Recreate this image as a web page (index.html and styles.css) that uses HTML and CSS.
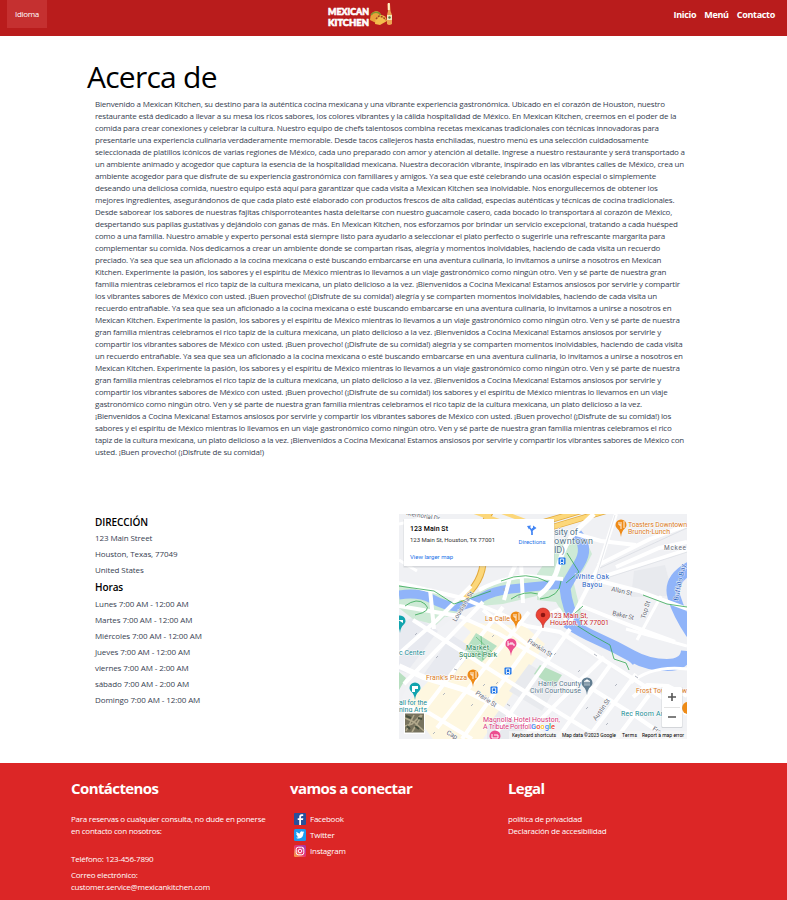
FILE: index.html
```html
<!DOCTYPE html>
<html lang="es">
<head>
<meta charset="utf-8">
<title>Mexican Kitchen</title>
<link rel="stylesheet" href="styles.css">
</head>
<body>
<header class="top">
  <button class="lang">Idioma</button>
  <svg class="logo" width="66" height="28" viewBox="0 0 66 28">
    <g class="logo-text">
      <text x="1" y="15" textLength="41" lengthAdjust="spacingAndGlyphs">MEXICAN</text>
      <text x="1" y="25.500" textLength="41" lengthAdjust="spacingAndGlyphs">KITCHEN</text>
    </g>
    <path d="M43 20q0-8 6-9q5 0 6 8l-6 4z" fill="#e9a13b"/>
    <path d="M44 15q3-4 8-2l4 5" fill="none" stroke="#7f9630" stroke-width="1.500"/>
    <path d="M48 24q0-8 6-9q5 0 6 6l-7 4z" fill="#f3bd4c"/>
    <path d="M49 19l3-3 4 1 3 3" fill="none" stroke="#a3401f" stroke-width="1.500" stroke-dasharray="2 1"/>
    <path d="M60.500 4h2.500l.5 7 1.500 4v9q-3 2-5 0v-9l1-4z" fill="#eda553"/>
    <path d="M60.800 3h2v7h-2z" fill="#fff0c8"/><path d="M60 15h5v5h-5z" fill="#f5e8bd"/><circle cx="62.500" cy="17.500" r="1.200" fill="#55713d"/>
  </svg>
  <nav class="nav"><a>Inicio</a><a>Menú</a><a>Contacto</a></nav>
</header>
<main>
  <h1>Acerca de</h1>
  <p class="about">Bienvenido a Mexican Kitchen, su destino para la auténtica cocina mexicana y una vibrante experiencia gastronómica. Ubicado en el corazón de Houston, nuestro<br>
restaurante está dedicado a llevar a su mesa los ricos sabores, los colores vibrantes y la cálida hospitalidad de México. En Mexican Kitchen, creemos en el poder de la<br>
comida para crear conexiones y celebrar la cultura. Nuestro equipo de chefs talentosos combina recetas mexicanas tradicionales con técnicas innovadoras para<br>
presentarle una experiencia culinaria verdaderamente memorable. Desde tacos callejeros hasta enchiladas, nuestro menú es una selección cuidadosamente<br>
seleccionada de platillos icónicos de varias regiones de México, cada uno preparado con amor y atención al detalle. Ingrese a nuestro restaurante y será transportado a<br>
un ambiente animado y acogedor que captura la esencia de la hospitalidad mexicana. Nuestra decoración vibrante, inspirado en las vibrantes calles de México, crea un<br>
ambiente acogedor para que disfrute de su experiencia gastronómica con familiares y amigos. Ya sea que esté celebrando una ocasión especial o simplemente<br>
deseando una deliciosa comida, nuestro equipo está aquí para garantizar que cada visita a Mexican Kitchen sea inolvidable. Nos enorgullecemos de obtener los<br>
mejores ingredientes, asegurándonos de que cada plato esté elaborado con productos frescos de alta calidad, especias auténticas y técnicas de cocina tradicionales.<br>
Desde saborear los sabores de nuestras fajitas chisporroteantes hasta deleitarse con nuestro guacamole casero, cada bocado lo transportará al corazón de México,<br>
despertando sus papilas gustativas y dejándolo con ganas de más. En Mexican Kitchen, nos esforzamos por brindar un servicio excepcional, tratando a cada huésped<br>
como a una familia. Nuestro amable y experto personal está siempre listo para ayudarlo a seleccionar el plato perfecto o sugerirle una refrescante margarita para<br>
complementar su comida. Nos dedicamos a crear un ambiente donde se compartan risas, alegría y momentos inolvidables, haciendo de cada visita un recuerdo<br>
preciado. Ya sea que sea un aficionado a la cocina mexicana o esté buscando embarcarse en una aventura culinaria, lo invitamos a unirse a nosotros en Mexican<br>
Kitchen. Experimente la pasión, los sabores y el espíritu de México mientras lo llevamos a un viaje gastronómico como ningún otro. Ven y sé parte de nuestra gran<br>
familia mientras celebramos el rico tapiz de la cultura mexicana, un plato delicioso a la vez. ¡Bienvenidos a Cocina Mexicana! Estamos ansiosos por servirle y compartir<br>
los vibrantes sabores de México con usted. ¡Buen provecho! (¡Disfrute de su comida!) alegría y se comparten momentos inolvidables, haciendo de cada visita un<br>
recuerdo entrañable. Ya sea que sea un aficionado a la cocina mexicana o esté buscando embarcarse en una aventura culinaria, lo invitamos a unirse a nosotros en<br>
Mexican Kitchen. Experimente la pasión, los sabores y el espíritu de México mientras lo llevamos a un viaje gastronómico como ningún otro. Ven y sé parte de nuestra<br>
gran familia mientras celebramos el rico tapiz de la cultura mexicana, un plato delicioso a la vez. ¡Bienvenidos a Cocina Mexicana! Estamos ansiosos por servirle y<br>
compartir los vibrantes sabores de México con usted. ¡Buen provecho! (¡Disfrute de su comida!) alegría y se comparten momentos inolvidables, haciendo de cada visita<br>
un recuerdo entrañable. Ya sea que sea un aficionado a la cocina mexicana o esté buscando embarcarse en una aventura culinaria, lo invitamos a unirse a nosotros en<br>
Mexican Kitchen. Experimente la pasión, los sabores y el espíritu de México mientras lo llevamos a un viaje gastronómico como ningún otro. Ven y sé parte de nuestra<br>
gran familia mientras celebramos el rico tapiz de la cultura mexicana, un plato delicioso a la vez. ¡Bienvenidos a Cocina Mexicana! Estamos ansiosos por servirle y<br>
compartir los vibrantes sabores de México con usted. ¡Buen provecho! (¡Disfrute de su comida!) los sabores y el espíritu de México mientras lo llevamos en un viaje<br>
gastronómico como ningún otro. Ven y sé parte de nuestra gran familia mientras celebramos el rico tapiz de la cultura mexicana, un plato delicioso a la vez.<br>
¡Bienvenidos a Cocina Mexicana! Estamos ansiosos por servirle y compartir los vibrantes sabores de México con usted. ¡Buen provecho! (¡Disfrute de su comida!) los<br>
sabores y el espíritu de México mientras lo llevamos en un viaje gastronómico como ningún otro. Ven y sé parte de nuestra gran familia mientras celebramos el rico<br>
tapiz de la cultura mexicana, un plato delicioso a la vez. ¡Bienvenidos a Cocina Mexicana! Estamos ansiosos por servirle y compartir los vibrantes sabores de México con<br>
usted. ¡Buen provecho! (¡Disfrute de su comida!)</p>
  <section class="visit">
    <div class="info">
      <h2>DIRECCIÓN</h2>
      <p>123 Main Street</p><p>Houston, Texas, 77049</p><p>United States</p>
      <h2 class="hours">Horas</h2>
      <p>Lunes 7:00 AM - 12:00 AM</p><p>Martes 7:00 AM - 12:00 AM</p><p>Miércoles 7:00 AM - 12:00 AM</p><p>Jueves 7:00 AM - 12:00 AM</p><p>viernes 7:00 AM - 2:00 AM</p><p>sábado 7:00 AM - 2:00 AM</p><p>Domingo 7:00 AM - 12:00 AM</p>
    </div>
    <svg class="map" width="288" height="225" viewBox="0 0 288 225">
      <defs>
        <g id="pin"><path d="M0 8C-1-1-5.500 0-5.500-4a5.500 5.500 0 0 1 11 0C5.500 0 1-1 0 8z"/></g>
        <g id="bus"><rect x="-3.500" y="-3.500" width="7" height="7" rx="1" fill="#1a73e8"/><path d="M-1.700-2h3.400v3.500h-3.400zM-1.500 2v1M1.500 2v1" fill="none" stroke="#fff" stroke-width=".9"/></g>
      </defs>
      <rect width="288" height="225" fill="#f0f1f4"/>
      <!-- city blocks -->
      <path d="M70 91L128 106 260 183 288 203V225H0V190L20 150 36 118z" fill="#f1f2f5"/>
      <path d="M60 108L126 112 146 130 84 225H34L8 190 40 156 72 118z" fill="#fef7e0"/>
      <path d="M0 110l17-8 22 15-32 42-7-2zM25 160l28-39 22 14-31 39z" fill="#e8eaf0"/>
      <path d="M110 177l20-27 30 18-17 29zM88 213l13-18 26 17-9 13h-30z" fill="#e8eaee"/>
      <path d="M235 57l31-6 8 31-42 1z" fill="#e8eaee"/>
      <!-- parks -->
      <path d="M0 68L30 74 53 89 80 78 112 62 146 66V80L104 90 70 93 48 103 0 90z" fill="#ceead6"/>
      <path d="M0 88L52 97 37 111 14 105 0 94z" fill="#ceead6"/>
      <path d="M160 27L183 18 193 40 184 57 174 66 184 107 172 113 157 88 138 86V60z" fill="#ceead6"/>
      <path d="M141 151l22 10-8 12-20-13zM0 158l7 6-7 12z" fill="#b7dfc0"/>
      <!-- river -->
      <g fill="none" stroke="#90b4f9" stroke-linejoin="round">
        <path d="M0 81Q20 78 33 85T58 93Q74 89 84 83T112 75T163 70" stroke-width="9"/>
        <path d="M178 20Q190 34 180 50T166 74Q168 94 178 111" stroke-width="11"/>
        <path d="M168 108Q181 117 199 125T233 142T268 151T288 137" stroke-width="12"/>
        <path d="M291 54Q270 66 275 83T293 119" stroke-width="13"/>
      </g>
      <path d="M229 146l5 5 4-6z" fill="#90b4f9"/>
      <!-- highways -->
      <g fill="none">
        <path d="M92-3Q82 9 84 40C86 60 77 74 62 86" stroke="#e2a93b" stroke-width="7"/>
        <path d="M92-3Q82 9 84 40C86 60 77 74 62 86" stroke="#fcd77a" stroke-width="5"/>
        <path d="M75-2L100 7M100-3L140 12" stroke="#fcd77a" stroke-width="4"/>
        <path d="M140 17L207-3M138 10L182-3" stroke="#e2a93b" stroke-width="6"/>
        <path d="M140 17L207-3M138 10L182-3" stroke="#fcd77a" stroke-width="4.500"/>
      </g>
      <!-- streets -->
      <g fill="none" stroke="#fff" stroke-width="4" stroke-linejoin="round">
        <path d="M0 69L63 84 95 97 128 112 161 118 208 148 264 184 288 200"/>
        <path d="M0 92L60 102 100 120 171 161 238 203 270 225"/>
        <path d="M14 106L76 146 141 187 203 225"/>
        <path d="M0 152L24 163 66 176 96 191 150 225" stroke-width="5.500"/>
        <path d="M0 190L30 199 73 225M84 96L129 131"/>
        <path d="M-5 144L38 106 72 72M5 170L84 88M24 197L104 93M38 214L130 98M63 225L112 156 144 112M93 225L171 115M122 225L205 143M158 225L212 150M188 225L237 160M217 225L250 181"/>
        <path d="M31 75L35 115M105 86L112 60 120 44M122 48L124 89M80 76Q100 65 126 62L164 65"/>
        <path d="M139 82Q155 71 160 50T179 15L195 0" stroke-width="5"/>
        <path d="M170 110L200 52 217 0"/>
        <path d="M197 65L288 36M197 66L240 77 288 95M180 91L235 113 276 128"/>
        <path d="M199 51L251 25 288 11M217 53L260 34 288 28M170 18L202 27 237 31"/>
        <path d="M238 126L262 82M232 169Q252 151 288 155M227 115L288 132" stroke-width="3"/>
        <path d="M234 183L248 171 269 172 288 182"/>
        <path d="M0 10L38 1M0 46L18 57M140 104L160 95 170 111" stroke-width="3"/>
      </g>
      <path d="M77 119l21 13-15 16-17-12z" fill="#b7e1c3"/>
      <g fill="none" stroke="#cdd1d8" stroke-width=".5">
        <path d="M198 67L288 38M201 54L288 14M197 64L216 1"/>
      </g>
      <g fill="none" stroke="#34a853" stroke-width=".8">
        <path d="M0 72L35 77 55 90 92 77M6 92q12-9 20-2t-10 11M102 67Q128 56 149 68M112 85q13-9 27-5M141 85q20-2 21-18M168 39l12 19-13 11M177 111l16 10 18 10 4 14 12 4 3 7M244 81l24 9 20 3M184 92l-9 8"/>
        <path d="M77 123l16 15M72 131l13 12M82 122l2 24" opacity=".6"/>
      </g>
      <g fill="none" stroke="#a9afba" stroke-width=".9">
        <path d="M16 121l2-2M37 144l2-2M44 181l2-2M72 192l2-2M84 172l2-2M97 170l2-2M111 205l2-2M93 123l2-2M61 146l2-2M179 158l2-2M216 172l2-2M187 195l2-2M207 211l2-2M34 220l2-2M155 141l2-2M55 155l3 1M108 190l3 2M195 140l3 2M236 162l3 2M105 74v3M120 81v3M68 85l3 1"/>
      </g>
      <!-- labels -->
      <g class="lbl street">
        <text transform="translate(7 1) rotate(10)" textLength="34">Memorial Dr</text>
        <text transform="translate(57 108) rotate(-59)" textLength="34">Louisiana St</text>
        <text transform="translate(128 128) rotate(33)" textLength="28">Franklin St</text>
        <text transform="translate(76 180) rotate(34)" textLength="24">Prairie St</text>
        <text transform="translate(197 207) rotate(-55)" textLength="25">Austin St</text>
        <text transform="translate(212 77) rotate(12)" textLength="21">Allen St</text>
        <text transform="translate(213 101) rotate(13)" textLength="22">Baker St</text>
        <text transform="translate(246 105) rotate(-73)" textLength="18">Top St</text>
        <text x="265" y="36" textLength="22">Mckee</text>
        <text transform="translate(47 220) rotate(29)">Cap</text>
        <text transform="translate(253 216) rotate(30)">Fra</text>
      </g>
      <g class="lbl blue">
        <text x="176" y="65" textLength="34">White Oak</text><text x="183" y="73" textLength="20">Bayou</text>
        <text transform="translate(279 87) rotate(-78)" textLength="37">Buffalo Bay</text>
      </g>
      <g class="lbl slate">
        <text x="155" y="21" textLength="24" class="big">sity of</text><text x="155" y="30" textLength="39" class="big">owntown</text><text x="155" y="39" textLength="11" class="big">ID)</text>
        <text x="139" y="172" textLength="43">Harris County</text><text x="131" y="179" textLength="51">Civil Courthouse</text>
      </g>
      <g class="lbl teal">
        <text x="0" y="141" textLength="26">c Center</text><text x="0" y="191" textLength="28">all for the</text><text x="0" y="198" textLength="28">ning Arts</text>
        <text x="222" y="202" textLength="42">Rec Room Ar</text>
      </g>
      <g class="lbl green"><text x="67" y="136" textLength="23">Market</text><text x="60" y="143" textLength="38">Square Park</text></g>
      <g class="lbl orange">
        <text x="86" y="107" textLength="25">La Calle</text><text x="27" y="166" textLength="41">Frank's Pizza</text>
        <text x="229" y="13" textLength="59">Toasters Downtown</text><text x="229" y="20" textLength="42">Brunch-Lunch</text>
        <text x="237" y="179" textLength="51">Frost Town Brew</text>
      </g>
      <g class="lbl pink"><text x="84" y="208" textLength="77">Magnolia Hotel Houston,</text><text x="84" y="215" textLength="52">A Tribute Portfolio</text></g>
      <g class="lbl red"><text x="151" y="104" textLength="38">123 Main St,</text><text x="151" y="111" textLength="59">Houston, TX 77001</text></g>
      <!-- markers -->
      <g fill="#ee8b17"><use href="#pin" x="222" y="15"/><use href="#pin" x="117" y="107"/><use href="#pin" x="74" y="165"/><circle cx="289" cy="194" r="6"/></g>
      <g fill="none" stroke="#fff" stroke-width=".9"><path d="M220 8v3h2v4m0-7v3m3-4v7M115 100v3h2v4m0-7v3m3-4v7M72 158v3h2v4m0-7v3m3-4v7"/></g>
      <g fill="#12a4ae"><use href="#pin" x="16" y="178"/><use href="#pin" x="1" y="111"/></g>
      <path d="M13 172h6v3h-3v3h-3zM-1 106h5v3" fill="#fff"/>
      <g fill="#ec4e8f"><use href="#pin" x="112" y="134"/><use href="#pin" x="96" y="226"/></g>
      <path d="M109 127v5m0-2h6v2m-4-3h3M93 220v4h6v-3h-4" fill="none" stroke="#fff"/>
      <use href="#pin" x="188" y="173" fill="#617d91"/><path d="M185 167.500l3-2 3 2zM185 171h6M186 167.500v3m2-3v3m2-3v3" fill="#fff" stroke="#fff" stroke-width=".5"/>
      <path d="M144 114c-1-8-7-8-7-13a7 7 0 0 1 14 0c0 5-6 5-7 13z" fill="#ea4335" stroke="#b31412" stroke-width=".5"/><circle cx="144" cy="101" r="2.300" fill="#8e1511"/>
      <use href="#bus" x="163" y="47"/><use href="#bus" x="109" y="157"/><use href="#bus" x="95" y="176"/>
      <!-- info card -->
      <rect x="4.500" y="5.500" width="151" height="48" fill="#9aa0a6" opacity=".3"/>
      <rect x="5" y="5" width="150" height="47" fill="#fff"/>
      <g class="card">
        <text class="title" x="11" y="17" textLength="38">123 Main St</text>
        <text x="11" y="28" textLength="85">123 Main St, Houston, TX 77001</text>
        <text class="link" x="11" y="45" textLength="43">View larger map</text><text class="link" x="119.500" y="30" textLength="27">Directions</text>
      </g>
      <path d="M133 21v-3q0-2-3-5M133 17q0-3 3-3" fill="none" stroke="#4285f4" stroke-width="1.700"/><path d="M134 11.500l3.500 2.500-3.500 2.500zM128 12l4-.5-2 4z" fill="#4285f4"/>
      <!-- controls -->
      <rect x="262.500" y="173" width="21" height="41" rx="1" fill="#9aa0a6" opacity=".35"/><rect x="263" y="173" width="20" height="40" rx="1" fill="#fff"/>
      <path d="M265 193.500h16" stroke="#e3e3e3"/><path d="M269 183h8m-4-4v8M269 203h8" stroke="#555" stroke-width="1.600"/>
      <rect x="5" y="198" width="21" height="22" fill="#fff"/><rect x="6" y="199.500" width="19" height="19" fill="#77735e"/>
      <path d="M6 204l9 4 10 9M7 217l8-16M13 218l10-17M6 212l7-2 9-9" fill="none" stroke="#b1a98c" stroke-width="1.500"/><path d="M7 202l5 2M16 212l4 3M8 212l3 3M19 204l4 1" stroke="#454e3c" stroke-width="2"/>
      <rect x="110" y="217" width="178" height="8" fill="#f5f5f5" opacity=".75"/>
      <text class="google" x="132" y="215" textLength="24"><tspan fill="#4285f4">G</tspan><tspan fill="#ea4335">o</tspan><tspan fill="#fbbc04">o</tspan><tspan fill="#4285f4">g</tspan><tspan fill="#34a853">l</tspan><tspan fill="#ea4335">e</tspan></text>
      <g class="legal-text"><text x="113" y="223" textLength="44">Keyboard shortcuts</text><text x="163" y="223" textLength="54">Map data ©2023 Google</text><text x="223" y="223" textLength="15">Terms</text><text x="243" y="223" textLength="42">Report a map error</text></g>
    </svg>
  </section>
</main>
<footer class="foot">
  <section>
    <h3>Contáctenos</h3>
    <p>Para reservas o cualquier consulta, no dude en ponerse<br>en contacto con nosotros:</p>
    <p class="phone">Teléfono: 123-456-7890</p>
    <p class="mail">Correo electrónico:<br>customer.service@mexicankitchen.com</p>
  </section>
  <section>
    <h3 class="connect">vamos a conectar</h3>
    <ul class="social">
      <li><svg width="12" height="12" viewBox="0 0 12 12"><rect width="12" height="12" rx="1" fill="#27509b"/><path d="M7 12V7h2l.3-1.800H7V4q0-1 1.200-1h1V1.300H8Q5.200 1.100 5.200 4v1.200H3.700V7h1.500v5z" fill="#fff"/></svg>Facebook</li>
      <li><svg width="12" height="12" viewBox="0 0 12 12"><rect width="12" height="12" rx="1.500" fill="#1d9bf0"/><path d="M2.500 2.800Q4 4.500 6 4.600 5.700 2.400 7.600 2.300q.8 0 1.200.5l1.200-.4-.7 1.100 1-.2-.9 1Q9.300 9.300 5 9.600q-1.700 0-3-.9 1.500.1 2.500-.7-1.300-.2-1.700-1.300h.8Q2.200 6.100 2.200 4.800l.8.200Q1.900 4 2.500 2.800z" fill="#fff"/></svg>Twitter</li>
      <li><svg width="12" height="12" viewBox="0 0 12 12"><defs><linearGradient id="ig" x1="0" y1="1" x2="1" y2="0"><stop stop-color="#fbb040"/><stop offset=".5" stop-color="#e8336d"/><stop offset="1" stop-color="#9b36b7"/></linearGradient></defs><rect width="12" height="12" rx="1.500" fill="url(#ig)"/><rect x="2.200" y="2.200" width="7.600" height="7.600" rx="2" fill="none" stroke="#fff"/><circle cx="6" cy="6" r="1.800" fill="none" stroke="#fff"/><circle cx="8.300" cy="3.800" r=".5" fill="#fff"/></svg>Instagram</li>
    </ul>
  </section>
  <section>
    <h3 class="legal">Legal</h3>
    <p>política de privacidad<br>Declaración de accesibilidad</p>
  </section>
</footer>
</body>
</html>
```
FILE: styles.css
```css
* { box-sizing: border-box; }
body { margin: 0; width: 787px; height: 900px; overflow: hidden; background: #fff; color: #374151; font: 8px/12px "Open Sans", "Noto Sans", sans-serif; display: flex; flex-direction: column; }
h1, h2, h3, p, ul { margin: 0; padding: 0; }
.top { height: 36px; flex: none; background: #b91c1c; display: grid; grid-template-columns: 320px 66px 1fr; padding: 0 12px 0 7px; color: #fff; }
.lang { width: 40px; height: 28px; border: 0; padding: 0; background: #c53030; color: #fff; font: 8px/28px "Open Sans", sans-serif; letter-spacing: -.3px; }
.logo-text { fill: #fff; stroke: #fff; stroke-width: .6px; font: 900 9px Lato, sans-serif; }
.nav { display: flex; justify-content: flex-end; gap: 8px; font-size: 9px; font-weight: 700; line-height: 30px; letter-spacing: -.3px; }
main { height: 727px; flex: none; padding: 20px 100px 0 87px; }
h1 { color: #000; font-size: 30px; font-weight: 400; line-height: 42px; letter-spacing: -.75px; }
.about { padding-left: 8px; white-space: nowrap; letter-spacing: -.202px; }
.visit { display: flex; justify-content: space-between; margin-top: 56px; padding-left: 8px; }
.info p { line-height: 16px; letter-spacing: -.1px; }
.info h2 { color: #000; font-size: 10px; font-weight: 600; line-height: 16px; letter-spacing: -.1px; }
.info .hours { line-height: 18px; }
.map { display: block; flex: none; }
.lbl { font: 7px Roboto, sans-serif; paint-order: stroke; stroke: #fff; stroke-width: .8px; }
.street { fill: #5f6672; font-size: 6.5px; }
.blue { fill: #2962c4; }
.slate { fill: #55758b; }
.big { font-size: 9px; }
.teal { fill: #168b94; }
.green { fill: #18804a; }
.orange { fill: #d97922; }
.pink { fill: #d83278; }
.red { fill: #c5221f; }
.card { font: 6px Roboto, sans-serif; fill: #333; }
.card .title { font-size: 7px; font-weight: 500; fill: #000; }
.card .link { fill: #1a73e8; }
.google { font: 500 7.500px Roboto, sans-serif; paint-order: stroke; stroke: #fff; stroke-width: 1px; }
.legal-text { font: 5px Roboto, sans-serif; fill: #000; }
.foot { flex: 1; background: #dc2626; color: #fff; display: grid; grid-template-columns: 219px 218px 1fr; padding: 15px 0 0 71px; letter-spacing: -.24px; }
.foot h3 { font-size: 15px; font-weight: 700; line-height: 20px; letter-spacing: -.6px; margin-bottom: 15px; }
.phone { margin-top: 16px; }
.mail { margin-top: 4px; }
.social { list-style: none; padding-left: 4px; margin-top: -2px; }
.social li { display: flex; align-items: center; gap: 4px; height: 16px; }
```
